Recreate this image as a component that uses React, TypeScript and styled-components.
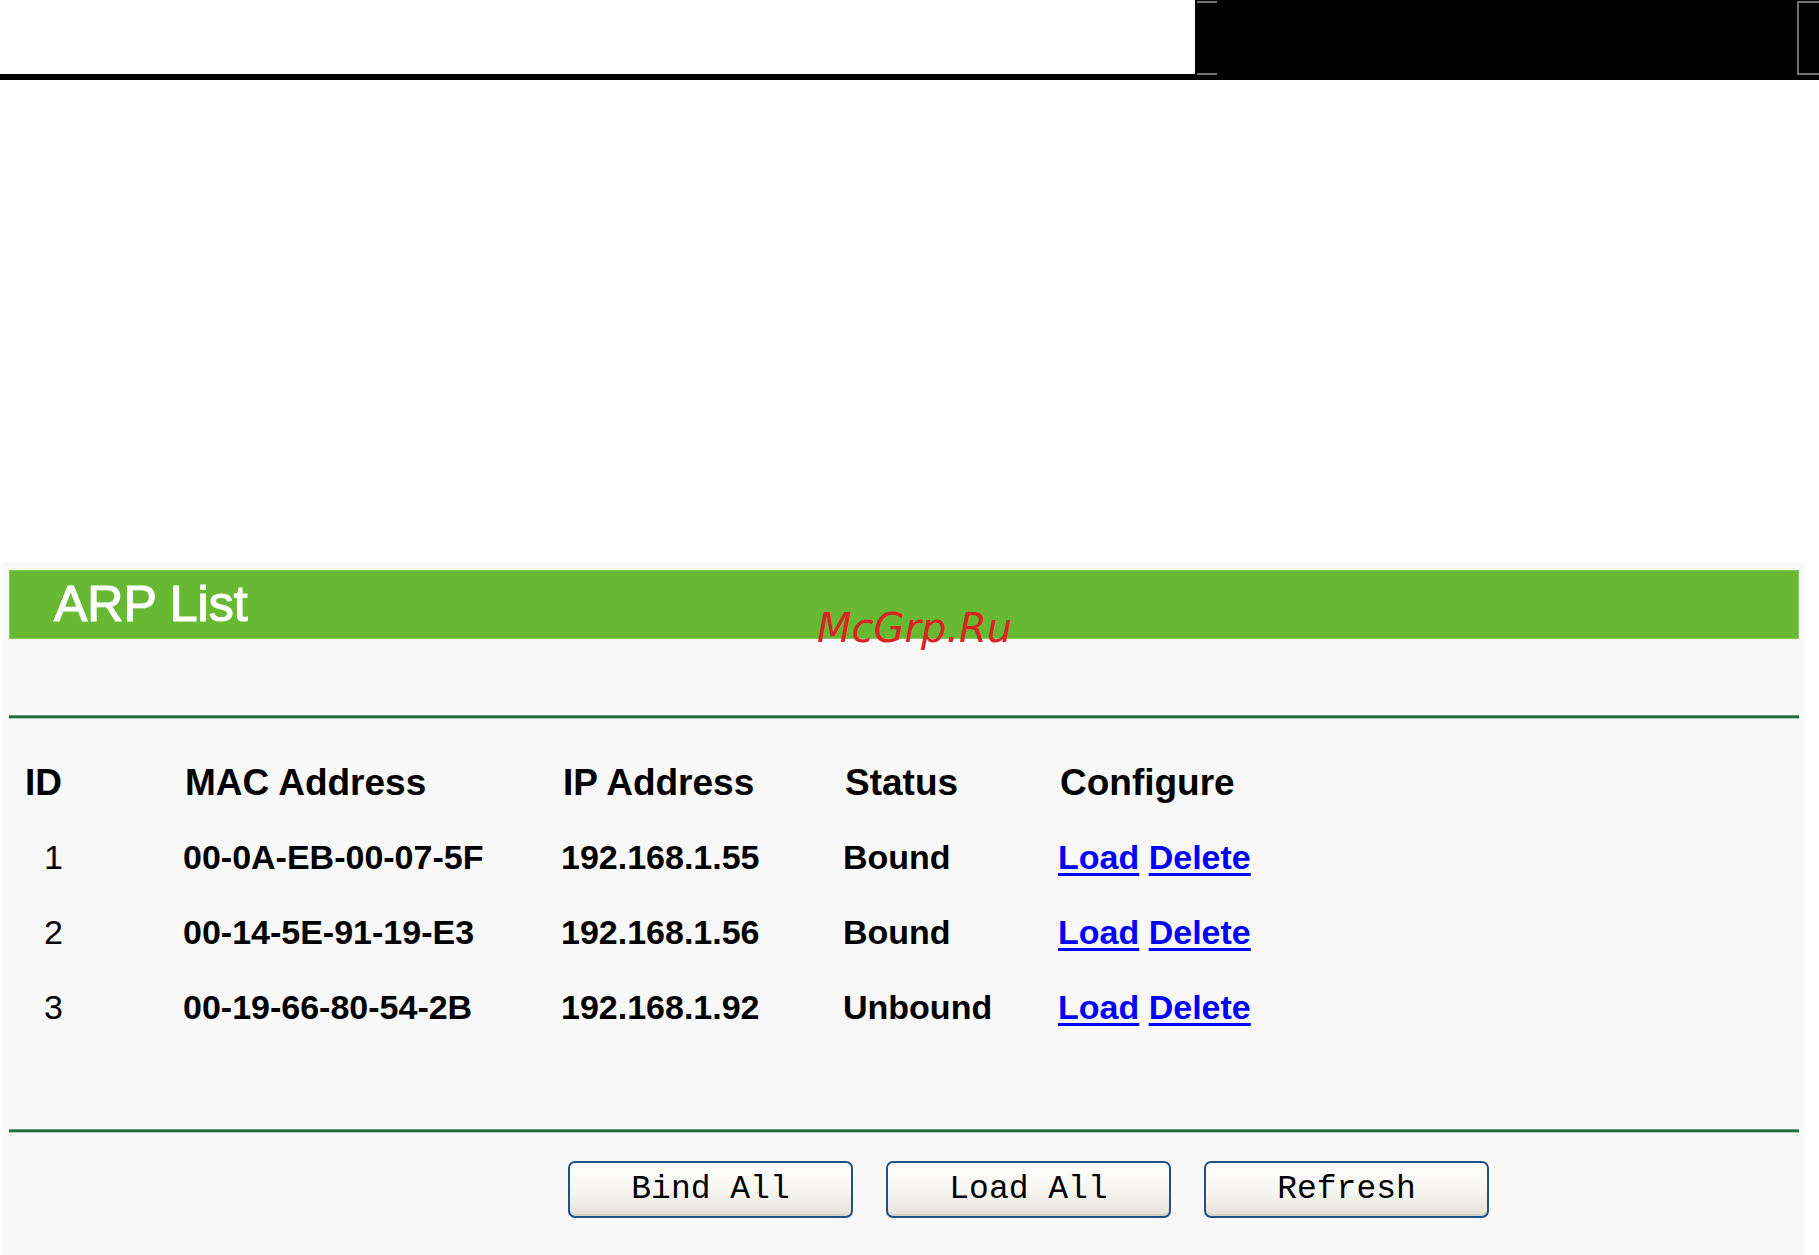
import React from "react";
import styled, { createGlobalStyle } from "styled-components";

const GlobalStyle = createGlobalStyle`
  html, body {
    margin: 0;
    padding: 0;
    background: #ffffff;
    font-family: "Liberation Sans", Arial, sans-serif;
  }
`;

const Page = styled.div`
  position: relative;
  width: 1819px;
  min-height: 1255px;
  overflow: hidden;
  background: #ffffff;
`;

const TopBar = styled.div`
  display: flex;
  height: 74px;
`;

const TopBlank = styled.div`
  flex: 1;
  background: #ffffff;
`;

const BlackBox = styled.div`
  position: relative;
  width: 624px;
  background: #000000;

  /* corner ticks on the left edge */
  &::before {
    content: "";
    position: absolute;
    left: 2px;
    top: 1px;
    width: 20px;
    height: 70px;
    border-top: 2px solid #707070;
    border-bottom: 2px solid #707070;
  }

  /* bracket on the right edge */
  &::after {
    content: "";
    position: absolute;
    left: 602px;
    top: 1px;
    width: 20px;
    height: 70px;
    border-top: 2px solid #707070;
    border-bottom: 2px solid #707070;
    border-left: 2px solid #707070;
  }
`;

const TopRule = styled.div`
  height: 6px;
  background: #000000;
`;

const Panel = styled.section`
  margin: 482px 15px 0 2px;
  padding: 8px 5px 37px 7px;
  background: #f8f8f8;
`;

const TitleBar = styled.h2`
  margin: 0;
  height: 69px;
  padding-left: 45px;
  background: #67b934;
  box-shadow: inset 0 0 0 1px #86c860;
  color: #ffffff;
  font-family: "Liberation Sans", Arial, sans-serif;
  font-weight: 400;
  font-size: 50px;
  line-height: 69px;
  -webkit-text-stroke: 1.2px #ffffff;
`;

const Rule = styled.div<{ $top: number }>`
  margin-top: ${(p) => p.$top}px;
  height: 4px;
  box-sizing: border-box;
  background: #1d6b3e;
  border-top: 1px solid #5f9c79;
  border-bottom: 1px solid #a9cdb7;
`;

const Table = styled.div`
  margin-top: 26px;
  display: flex;
  flex-direction: column;
`;

const Row = styled.div`
  display: grid;
  grid-template-columns: 160px 378px 282px 215px 1fr;
  align-items: center;
  height: 75px;
  padding-left: 16px;
`;

const HeadCell = styled.div`
  font-size: 37px;
  font-weight: 700;
  color: #000000;
  white-space: nowrap;
`;

const Cell = styled.div<{ $regular?: boolean; $indent?: number }>`
  font-size: 34px;
  font-weight: ${(p) => (p.$regular ? 400 : 700)};
  padding-left: ${(p) => p.$indent ?? 0}px;
  margin-left: ${(p) => (p.$regular ? 0 : -2)}px;
  color: #000000;
  white-space: nowrap;
`;

const ConfigLink = styled.a`
  color: #0000ff;
  font-weight: 700;
  text-decoration: underline;
  text-decoration-thickness: 3px;
  text-underline-offset: 4px;
`;

const ButtonRow = styled.div`
  display: flex;
  gap: 33px;
  margin-top: 28px;
  padding-left: 559px;
`;

const Button = styled.button`
  width: 285px;
  height: 57px;
  padding: 0;
  border: 2px solid #1f5288;
  border-radius: 7px;
  background: linear-gradient(#ffffff 0%, #f6f5f1 55%, #e4e1d7 100%);
  box-shadow: inset 0 -2px 0 #d6d2c5, inset 0 2px 0 #ffffff;
  font-family: "Liberation Mono", "Courier New", monospace;
  font-size: 33px;
  color: #000000;
  cursor: pointer;
`;

const Watermark = styled.div`
  position: absolute;
  left: 817px;
  top: 608px;
  font-family: "DejaVu Sans", sans-serif;
  font-style: oblique;
  font-size: 40px;
  line-height: 40px;
  color: #dc2323;
  pointer-events: none;
`;

type Entry = { id: number; mac: string; ip: string; status: string };

const entries: Entry[] = [
  { id: 1, mac: "00-0A-EB-00-07-5F", ip: "192.168.1.55", status: "Bound" },
  { id: 2, mac: "00-14-5E-91-19-E3", ip: "192.168.1.56", status: "Bound" },
  { id: 3, mac: "00-19-66-80-54-2B", ip: "192.168.1.92", status: "Unbound" },
];

export default function App() {
  return (
    <Page>
      <GlobalStyle />
      <TopBar>
        <TopBlank />
        <BlackBox />
      </TopBar>
      <TopRule />
      <Panel>
        <TitleBar>ARP List</TitleBar>
        <Rule $top={76} />
        <Table>
          <Row>
            <HeadCell>ID</HeadCell>
            <HeadCell>MAC Address</HeadCell>
            <HeadCell>IP Address</HeadCell>
            <HeadCell>Status</HeadCell>
            <HeadCell>Configure</HeadCell>
          </Row>
          {entries.map((e) => (
            <Row key={e.id}>
              <Cell $regular $indent={19}>
                {e.id}
              </Cell>
              <Cell>{e.mac}</Cell>
              <Cell>{e.ip}</Cell>
              <Cell>{e.status}</Cell>
              <Cell>
                <ConfigLink href="#">Load</ConfigLink>{" "}
                <ConfigLink href="#">Delete</ConfigLink>
              </Cell>
            </Row>
          ))}
        </Table>
        <Rule $top={84} />
        <ButtonRow>
          <Button>Bind All</Button>
          <Button>Load All</Button>
          <Button>Refresh</Button>
        </ButtonRow>
      </Panel>
      <Watermark>McGrp.Ru</Watermark>
    </Page>
  );
}
